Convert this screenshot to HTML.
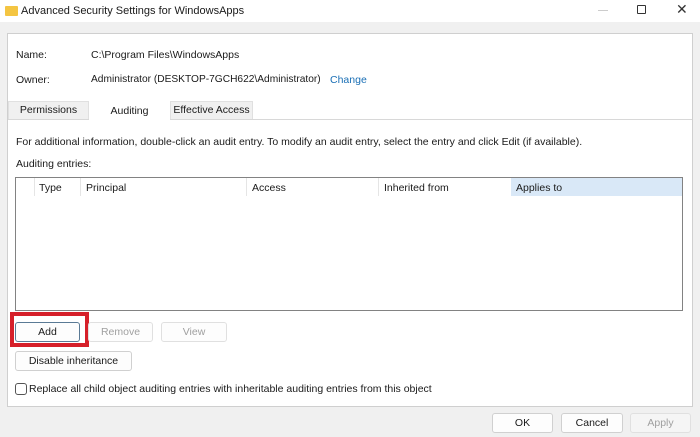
<!DOCTYPE html>
<html><head><style>
*{box-sizing:border-box;margin:0;padding:0}
body{width:700px;height:437px;background:#f0f0f0;font-family:"Liberation Sans",sans-serif;font-size:10.5px;color:#1a1a1a;position:relative;overflow:hidden}
.a{position:absolute}
.btn{position:absolute;border:1px solid #d0d0d0;background:#fdfdfd;border-radius:3px;text-align:center;line-height:18px;font-size:10.5px}
.dis{color:#a0a0a0;border-color:#e0e0e0}
</style></head><body>
<div class="a" style="left:0;top:0;width:700px;height:22px;background:#fff"></div>
<div class="a" style="left:5px;top:6px;width:13px;height:10px;background:#f4c542;border-radius:1px"></div>
<div class="a" style="left:21px;top:5px;font-size:11px">Advanced Security Settings for WindowsApps</div>
<div class="a" style="left:598px;top:10px;width:10px;height:1px;background:#ccc"></div>
<div class="a" style="left:637px;top:5px;width:9px;height:9px;border:1px solid #333;border-radius:1px"></div>
<div class="a" style="left:676px;top:1px;font-size:14px;color:#333">✕</div>

<div class="a" style="left:7px;top:33px;width:686px;height:374px;background:#fff;border:1px solid #cfcfcf"></div>
<div class="a" style="left:16px;top:49px">Name:</div>
<div class="a" style="left:91px;top:49px">C:\Program Files\WindowsApps</div>
<div class="a" style="left:16px;top:74px">Owner:</div>
<div class="a" style="left:91px;top:74px;font-size:10.2px">Administrator (DESKTOP-7GCH622\Administrator)</div>
<div class="a" style="left:330px;top:74px;color:#1a6fb5">Change</div>

<div class="a" style="left:8px;top:119px;width:684px;height:1px;background:#d8d8d8"></div>
<div class="a" style="left:8px;top:101px;width:81px;height:18px;background:#f0f0f0;border:1px solid #e0e0e0;border-bottom:none;text-align:center;line-height:17px">Permissions</div>
<div class="a" style="left:89px;top:101px;width:81px;height:20px;background:#fff;text-align:center;line-height:21px">Auditing</div>
<div class="a" style="left:170px;top:101px;width:83px;height:18px;background:#f0f0f0;border:1px solid #e0e0e0;border-bottom:none;text-align:center;line-height:17px">Effective Access</div>

<div class="a" style="left:16px;top:136px">For additional information, double-click an audit entry. To modify an audit entry, select the entry and click Edit (if available).</div>
<div class="a" style="left:16px;top:158px">Auditing entries:</div>

<div class="a" style="left:15px;top:177px;width:668px;height:134px;border:1px solid #828282;background:#fff"></div>
<div class="a" style="left:511px;top:178px;width:171px;height:18px;background:#d9e8f7"></div>
<div class="a" style="left:34px;top:178px;width:1px;height:18px;background:#e5e5e5"></div>
<div class="a" style="left:80px;top:178px;width:1px;height:18px;background:#e5e5e5"></div>
<div class="a" style="left:246px;top:178px;width:1px;height:18px;background:#e5e5e5"></div>
<div class="a" style="left:378px;top:178px;width:1px;height:18px;background:#e5e5e5"></div>
<div class="a" style="left:39px;top:182px">Type</div>
<div class="a" style="left:86px;top:182px">Principal</div>
<div class="a" style="left:252px;top:182px">Access</div>
<div class="a" style="left:384px;top:182px">Inherited from</div>
<div class="a" style="left:516px;top:182px">Applies to</div>

<div class="a" style="left:10px;top:312px;width:79px;height:35px;border:4px solid #d6202a"></div>
<div class="btn" style="left:15px;top:322px;width:65px;height:20px;border-color:#5a7a95">Add</div>
<div class="btn dis" style="left:88px;top:322px;width:65px;height:20px">Remove</div>
<div class="btn dis" style="left:161px;top:322px;width:66px;height:20px">View</div>
<div class="btn" style="left:15px;top:351px;width:117px;height:20px">Disable inheritance</div>
<div class="a" style="left:15px;top:383px;width:12px;height:12px;border:1px solid #555;border-radius:3px"></div>
<div class="a" style="left:29px;top:383px">Replace all child object auditing entries with inheritable auditing entries from this object</div>

<div class="btn" style="left:492px;top:413px;width:61px;height:20px">OK</div>
<div class="btn" style="left:561px;top:413px;width:62px;height:20px">Cancel</div>
<div class="btn dis" style="left:630px;top:413px;width:61px;height:20px;background:#f5f5f5">Apply</div>
</body></html>
